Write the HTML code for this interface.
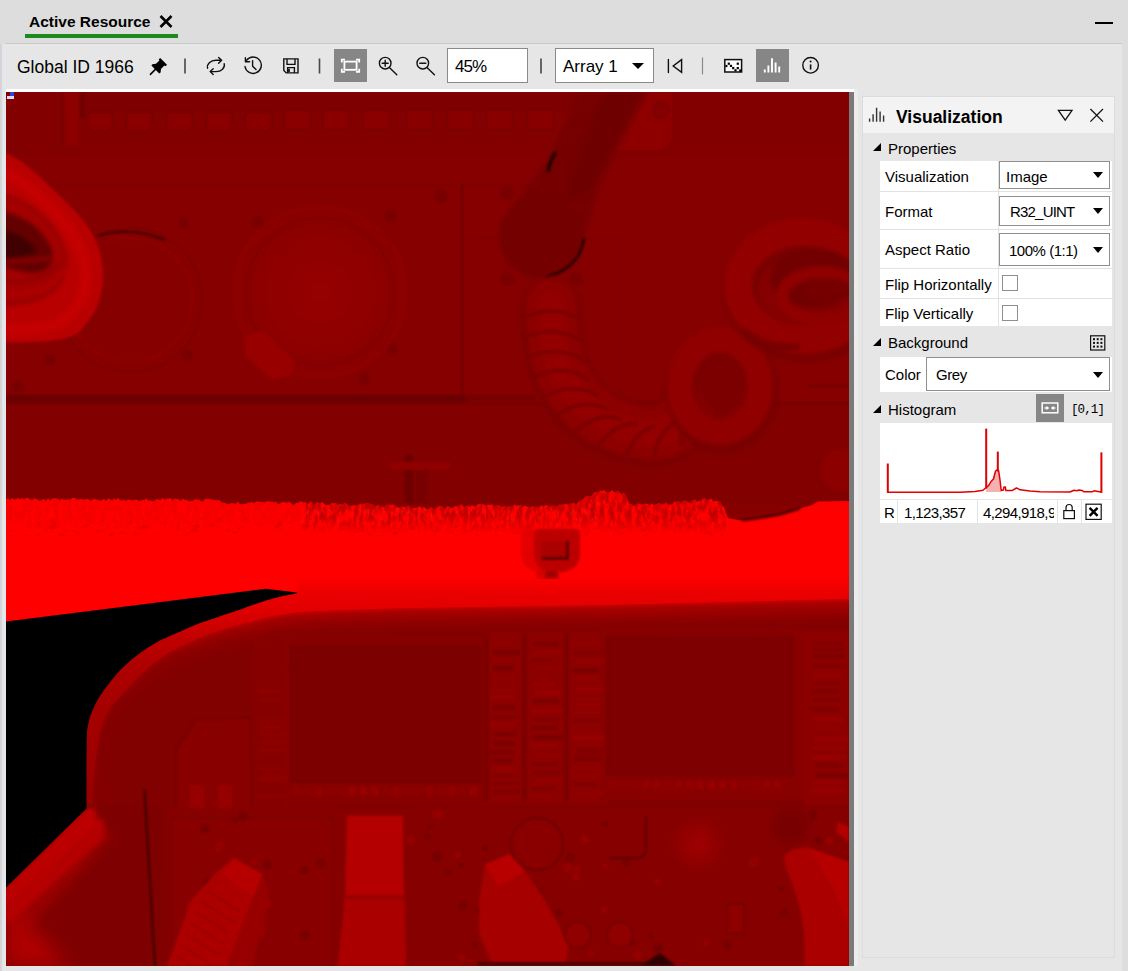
<!DOCTYPE html>
<html lang="en">
<head>
<meta charset="utf-8">
<title>Active Resource</title>
<style>
*{box-sizing:border-box;margin:0;padding:0}
html,body{width:1128px;height:971px;overflow:hidden;background:#dddddd;font-family:"Liberation Sans",sans-serif;color:#000}
.abs{position:absolute}
#tabstrip{left:0;top:0;width:1128px;height:43px;background:#dddddd}
#tabtitle{left:29px;top:12px;font-weight:bold;font-size:15.5px;line-height:20px;white-space:nowrap}
#tabline{left:25px;top:34px;width:153px;height:4px;background:#1e8a1e}
#mindash{left:1095px;top:22px;width:18px;height:2px;background:#000}
#main{left:6px;top:43px;width:1116px;height:928px;background:#e6e6e6;border-top:1px solid #c9c9c9}
#tb-title{left:17px;top:56px;font-size:17.5px;line-height:22px;white-space:nowrap}
.sep{width:1px;height:15px;background:#555;top:59px}
.btn-on{background:#868686;width:33px;height:33px;top:49px}
.inp{background:#fff;border:1px solid #8a8a8a;top:48px;height:35px;font-size:17px;line-height:35px;white-space:nowrap}
#whiteline{left:6px;top:89px;width:848px;height:3px;background:#fff}
#imgwrap{left:6px;top:92px;width:843px;height:874px;background:#8a0000;overflow:hidden}
#vstrip{left:849px;top:92px;width:5px;height:874px;background:#7a7a7a}
#panel{left:862px;top:96px;width:253px;height:862px;border:1px solid #dcdcdc}
#phead{left:863px;top:97px;width:251px;height:36px;background:#f3f3f3}
#ptitle{left:896px;top:106px;font-weight:bold;font-size:17.5px;line-height:22px;white-space:nowrap}
.sect{font-size:15px;line-height:18px;white-space:nowrap;left:888px}
.tri{width:0;height:0;border-left:8px solid transparent;border-bottom:8px solid #000;left:872.5px;margin-top:-1px}
.row{left:880px;width:232px;background:#fff;border-bottom:1px solid #e2e2e2}
.lbl{font-size:15px;line-height:18px;white-space:nowrap;left:885px}
.dd{background:#fff;border:1px solid #8f8f8f;font-size:15px;white-space:nowrap}
.dd span{position:absolute;left:9px;top:1px}
.caret{position:absolute;right:6px;width:0;height:0;border-left:5px solid transparent;border-right:5px solid transparent;border-top:6px solid #000}
.cb{width:16px;height:16px;background:#fff;border:1px solid #8f8f8f;left:1002px}
.vdiv{width:1px;background:#e2e2e2}
</style>
</head>
<body>
<div id="tabstrip" class="abs"></div>
<div id="tabtitle" class="abs">Active Resource</div>
<div id="tabline" class="abs"></div>
<div id="mindash" class="abs"></div>
<div class="abs" style="left:0;top:44px;width:6px;height:927px;background:linear-gradient(90deg,#d2d2d2 0,#d6d6d6 1.5px,#e3e5e9 2.5px,#e6e8ec 6px)"></div>
<div id="main" class="abs"></div>
<div id="tb-title" class="abs">Global ID 1966</div>
<div class="abs btn-on" style="left:334px"></div>
<div class="abs btn-on" style="left:756px"></div>
<div class="abs inp" style="left:447px;width:81px;padding-left:7px;letter-spacing:-0.9px">45%</div>
<div class="abs inp" style="left:555px;width:99px;padding-left:7px">Array 1<i class="caret" style="top:14px;right:9px;border-left-width:6px;border-right-width:6px;border-top-width:6px"></i></div>
<svg class="abs" style="left:0;top:0" width="1128" height="92" viewBox="0 0 1128 92" fill="none" stroke="#111" stroke-width="1.4" stroke-linecap="round" stroke-linejoin="round">
<!-- tab close X -->
<path d="M160.5 16 L171.5 27 M171.5 16 L160.5 27" stroke="#000" stroke-width="2.6" stroke-linecap="butt"/>
<!-- pin -->
<g stroke="none" fill="#000"><path d="M160.2 58 L167 64.8 L165.6 66.2 L164.4 65.6 L161 69 L160.6 72.6 L159.2 73.4 L151.4 65.6 L152.4 64.2 L156 63.8 L159.4 60.4 L158.8 59.2 Z"/></g>
<path d="M155.4 69.4 L150.4 74.4" stroke="#000" stroke-width="1.5"/>
<!-- separators -->
<g stroke="#484848" stroke-width="1.6" stroke-linecap="butt"><path d="M185 58.5V73.5M319.5 58.5V73.5M541 58.5V73.5"/><path d="M702.5 57.5V74.5" stroke="#8a8a8a" stroke-width="1.2"/></g>
<!-- refresh -->
<path d="M207.6 68.2 A8.4 6.6 0 0 1 215.8 60.3 H221.4 M218.6 57.5 L221.6 60.3 L218.6 63.2"/>
<path d="M224.2 63.6 A8.4 6.6 0 0 1 216 71.6 H210.4 M213.2 68.7 L210.2 71.6 L213.2 74.4"/>
<!-- history -->
<path d="M246.6 60.2 A8.2 8.2 0 1 1 245 66.5"/>
<path d="M245.4 57.6 V61.8 H249.6"/>
<path d="M252.6 60.6 V66.2 L256 69.6"/>
<!-- save -->
<path d="M283.8 58.9 H298 V72.9 H286.2 L283.8 70.5 Z M287 58.9 V64.4 H295 V58.9 M287.6 72.9 V67.6 H294.4 V72.9" stroke-linejoin="miter"/>
<path d="M289 68.8 V72" stroke-width="1.8" stroke-linecap="butt"/>
<!-- fit icon -->
<g stroke="#fff" stroke-width="1.8" stroke-linecap="butt" stroke-linejoin="miter"><rect x="344.4" y="61.6" width="12.2" height="8.2"/><path d="M341.8 62.6 V59.6 H345 M356 59.6 H359.2 V62.6 M359.2 68.8 V71.8 H356 M345 71.8 H341.8 V68.8"/></g>
<!-- zoom in -->
<circle cx="385.2" cy="63.2" r="5.8"/><path d="M389.4 67.6 L396.8 74.8 M382.2 63.2 H388.2 M385.2 60.2 V66.2"/>
<!-- zoom out -->
<circle cx="422.8" cy="63.2" r="5.8"/><path d="M427 67.6 L434.4 74.8 M419.8 63.2 H425.8"/>
<!-- first -->
<path d="M668.4 59.4 V72.6 M681.6 59.6 L673.2 66 L681.6 72.4 Z" stroke-linejoin="miter"/>
<!-- image icon -->
<rect x="724.8" y="59.6" width="16.8" height="12.4" fill="#fbfbfb" stroke-width="1.5" stroke-linejoin="miter"/>
<g stroke="none" fill="#000"><rect x="727.7" y="62.6" width="2.2" height="2.2"/><rect x="725.4" y="64.9" width="2" height="2.2"/><rect x="729.9" y="64.8" width="2.2" height="2.2"/><rect x="732.1" y="67" width="2.2" height="2.2"/><rect x="734.4" y="69.2" width="2.2" height="2.2"/><rect x="736.7" y="62.6" width="2.2" height="2.2"/><rect x="736.7" y="67" width="2.2" height="2.2"/><rect x="739.2" y="69.4" width="2.4" height="2.4"/></g>
<!-- hist icon white -->
<g stroke="#fff" stroke-width="1.9" stroke-linecap="butt"><path d="M764.8 72.6V69.4M768.4 72.6V65.4M772 72.6V58.2M775.6 72.6V62.4M779.2 72.6V66.6"/></g>
<!-- info -->
<circle cx="810.6" cy="65.3" r="7.8"/><path d="M810.6 64.4 V69.6" stroke-width="1.6" stroke-linecap="butt"/><circle cx="810.6" cy="61.6" r="1" fill="#111" stroke="none"/>
<!-- minimise handled by div -->
</svg>

<div id="whiteline" class="abs"></div>
<div id="vstrip" class="abs"></div>
<div class="abs" style="left:854px;top:89px;width:4px;height:877px;background:#ececec"></div>
<div id="imgwrap" class="abs">
<svg width="843" height="874" viewBox="6 92 843 874" style="display:block">
<defs>
<filter id="b1" color-interpolation-filters="sRGB" filterUnits="userSpaceOnUse" x="-10" y="80" width="880" height="900"><feGaussianBlur stdDeviation="1"/></filter>
<filter id="b2" color-interpolation-filters="sRGB" filterUnits="userSpaceOnUse" x="-10" y="80" width="880" height="900"><feGaussianBlur stdDeviation="2.2"/></filter>
<filter id="b4" color-interpolation-filters="sRGB" filterUnits="userSpaceOnUse" x="-10" y="80" width="880" height="900"><feGaussianBlur stdDeviation="4.5"/></filter>
<filter id="b8" color-interpolation-filters="sRGB" filterUnits="userSpaceOnUse" x="-10" y="80" width="880" height="900"><feGaussianBlur stdDeviation="9"/></filter>
<linearGradient id="gband" gradientUnits="userSpaceOnUse" x1="0" y1="490" x2="0" y2="600"><stop offset="0" stop-color="#fb0000"/><stop offset=".35" stop-color="#ff0000"/><stop offset="1" stop-color="#fe0000"/></linearGradient>
<linearGradient id="gcoil" x1="0" y1="0" x2="1" y2="0">
<stop offset="0" stop-color="#b60000"/><stop offset=".6" stop-color="#c60000"/><stop offset="1" stop-color="#a80000"/>
</linearGradient>
<linearGradient id="gpillar" x1="0" y1="0" x2="1" y2="0">
<stop offset="0" stop-color="#c40000"/><stop offset=".5" stop-color="#b40000"/><stop offset="1" stop-color="#980000"/>
</linearGradient>
<filter id="noise" color-interpolation-filters="sRGB" x="0" y="0" width="100%" height="100%"><feTurbulence type="fractalNoise" baseFrequency="0.22 0.09" numOctaves="3" seed="4" result="n"/><feColorMatrix in="n" type="matrix" values="0 0 0 0 0.66  0 0 0 0 0  0 0 0 0 0  4 0 0 0 -1.5" result="m"/><feComposite in="m" in2="SourceGraphic" operator="in"/></filter>
<filter id="noise2" color-interpolation-filters="sRGB" x="0" y="0" width="100%" height="100%"><feTurbulence type="fractalNoise" baseFrequency="0.3 0.12" numOctaves="2" seed="9" result="n"/><feColorMatrix in="n" type="matrix" values="0 0 0 0 1  0 0 0 0 0.2  0 0 0 0 0.2  0 3.4 0 0 -1.75" result="m"/><feComposite in="m" in2="SourceGraphic" operator="in"/></filter>
<filter id="noise3" color-interpolation-filters="sRGB" x="0" y="0" width="100%" height="100%"><feTurbulence type="fractalNoise" baseFrequency="0.12 0.2" numOctaves="2" seed="21" result="n"/><feColorMatrix in="n" type="matrix" values="0 0 0 0 0.78  0 0 0 0 0  0 0 0 0 0  0 0 4 0 -2.35" result="m"/><feComposite in="m" in2="SourceGraphic" operator="in"/></filter>
<radialGradient id="ggauge"><stop offset="0" stop-color="#960000"/><stop offset=".8" stop-color="#8e0000"/><stop offset="1" stop-color="#880000"/></radialGradient>
<radialGradient id="gknob"><stop offset="0" stop-color="#a00000"/><stop offset="1" stop-color="#860000"/></radialGradient>
</defs>
<!-- base -->
<rect x="6" y="92" width="843" height="874" fill="#860000"/>
<!-- upper wall details -->
<g filter="url(#b1)">
<rect x="6" y="92" width="843" height="66" fill="#830000"/><rect x="80" y="92" width="500" height="20" fill="#7e0000"/>
<rect x="22" y="159.5" width="560" height="2.5" fill="#760000"/>
<rect x="30" y="184" width="540" height="2" fill="#7e0000"/>
<rect x="6" y="158" width="560" height="26" fill="#860000"/>
<!-- top button row -->
<g fill="#8a0000" stroke="#760000" stroke-width="1.8">
<rect x="87" y="112" width="26" height="20" rx="5"/><rect x="126" y="112" width="27" height="20" rx="5"/><rect x="166" y="112" width="27" height="20" rx="5"/><rect x="206" y="112" width="27" height="20" rx="5"/><rect x="245" y="112" width="27" height="20" rx="5"/><rect x="284" y="110" width="27" height="20" rx="5"/><rect x="323" y="110" width="27" height="20" rx="5"/><rect x="363" y="110" width="27" height="20" rx="5"/><rect x="406" y="110" width="27" height="20" rx="5"/><rect x="447" y="110" width="27" height="20" rx="5"/><rect x="486" y="110" width="27" height="20" rx="5"/><rect x="527" y="110" width="27" height="20" rx="5"/>
</g>
<rect x="63" y="92" width="16" height="53" fill="#8c0000"/><rect x="61" y="92" width="2.5" height="54" fill="#740000"/><rect x="80" y="92" width="5" height="26" fill="#700000"/>
<!-- gauges -->
<circle cx="130" cy="300" r="72" fill="#870000" stroke="#7c0000" stroke-width="2"/>
<circle cx="130" cy="300" r="62" fill="none" stroke="#8f0000" stroke-width="2"/>
<path d="M98 236 Q130 226 165 240" stroke="#3c0000" stroke-width="2" fill="none"/>
<circle cx="320" cy="292" r="86" fill="#8a0000" stroke="#900000" stroke-width="2.5"/>
<circle cx="320" cy="292" r="74" fill="url(#ggauge)" stroke="#800000" stroke-width="2"/>
<path d="M243 338 L262 330 L296 362 L290 376 L272 380 L246 356 Z" fill="#980000"/>
<!-- screws -->
<g fill="#7a0000"><circle cx="183" cy="223" r="6"/><circle cx="258" cy="222" r="6"/><circle cx="391" cy="216" r="6"/><circle cx="187" cy="355" r="6"/><circle cx="393" cy="349" r="6"/><circle cx="50" cy="360" r="6"/><circle cx="364" cy="379" r="6"/><circle cx="358" cy="451" r="5"/><circle cx="18" cy="387" r="7"/><circle cx="441" cy="196" r="7"/><circle cx="507" cy="193" r="7"/><circle cx="507" cy="279" r="7"/><circle cx="576" cy="279" r="7"/><circle cx="660" cy="110" r="7"/><circle cx="594" cy="462" r="5"/></g>
<!-- lower wall panel -->
<rect x="6" y="404" width="843" height="100" fill="#820000"/>
<rect x="6" y="395" width="460" height="7" fill="#6a0000"/><rect x="466" y="395" width="70" height="6" fill="#760000"/><rect x="6" y="402" width="843" height="3" fill="#780000"/>
<rect x="461" y="184" width="2" height="216" fill="#6a0000"/>
<rect x="463" y="238" width="160" height="1.5" fill="#7e0000"/>
<rect x="620" y="238" width="1.5" height="160" fill="#800000"/>
<path d="M100 500 Q126 484 152 500 Z" fill="#800000"/>
<rect x="405" y="455" width="8" height="48" fill="#6c0000"/>
<rect x="416" y="465" width="12" height="38" fill="#780000"/>
<rect x="390" y="462" width="60" height="8" fill="#900000"/>
</g>
<!-- dark arm -->
<path d="M640 92 L672 92 L672 140 L660 150 L612 150 Z" fill="#8e0000" filter="url(#b1)"/>
<circle cx="661" cy="110" r="7.5" fill="#860000" stroke="#780000" stroke-width="2" filter="url(#b1)"/>
<g filter="url(#b2)">
<path d="M580 92 L648 92 L616 152 L599 188 L586 232 L560 262 L505 250 L501 220 L522 194 L550 156 Z" fill="#760000"/>
<circle cx="541.7" cy="236.7" r="42.5" fill="#740000"/>
<path d="M606 92 L640 92 L608 152 L590 190 L566 200 L580 150 Z" fill="#6e0000"/>
</g>
<path d="M584 238 Q580 268 546 277" stroke="#2a0000" stroke-width="2.5" fill="none" filter="url(#b1)"/>
<path d="M556 152 Q550 160 548 172" stroke="#200000" stroke-width="3.5" fill="none" filter="url(#b1)"/>
<!-- corrugated hose -->
<g filter="url(#b2)" fill="none" stroke-linecap="round">
<path d="M551 308 C552 340 556 370 573 394 S610 430 644 435 S690 412 702 380" stroke="#7a0000" stroke-width="62"/>
<path d="M551 305 C552 340 556 370 573 392 S610 428 644 433 S690 410 700 378" stroke="#8c0000" stroke-width="52"/>
<path d="M551 305 C552 340 556 370 573 392 S610 428 644 433 S690 410 700 378" stroke="#940000" stroke-width="26"/>
</g>
<g filter="url(#b1)" stroke="#7a0000" stroke-width="3.5" fill="none">
<path d="M524 318 Q550 304 578 318"/><path d="M524 338 Q552 324 580 340"/><path d="M527 358 Q556 344 584 360"/><path d="M533 378 Q562 362 590 380"/><path d="M542 398 Q572 380 598 396"/><path d="M556 416 Q584 396 608 410"/><path d="M574 432 Q600 410 622 420"/><path d="M598 446 Q616 422 638 424"/><path d="M626 456 Q636 430 656 426"/><path d="M654 456 Q658 432 678 420"/><path d="M682 446 Q678 424 694 408"/>
</g>
<!-- right coil -->
<g filter="url(#b2)" fill="none">
<ellipse cx="722" cy="390" rx="40" ry="46" stroke="#780000" stroke-width="34"/>
<ellipse cx="720" cy="386" rx="40" ry="46" stroke="#900000" stroke-width="26"/>
<ellipse cx="722" cy="386" rx="22" ry="28" fill="#7c0000"/>
<ellipse cx="806" cy="290" rx="66" ry="54" stroke="#780000" stroke-width="36"/>
<ellipse cx="804" cy="286" rx="66" ry="54" stroke="#930000" stroke-width="28"/>
<ellipse cx="814" cy="278" rx="44" ry="30" fill="#720000"/>
<ellipse cx="822" cy="296" rx="40" ry="24" stroke="#900000" stroke-width="12"/>
<ellipse cx="828" cy="290" rx="24" ry="12" fill="#760000"/>
<path d="M742 330 Q770 352 800 346" stroke="#760000" stroke-width="7"/>
</g>
<circle cx="842" cy="470" r="24" fill="#8c0000" stroke="#7c0000" stroke-width="3" filter="url(#b2)"/>
<rect x="808" y="384" width="41" height="3" fill="#760000" filter="url(#b1)"/>
<!-- left coil -->
<g filter="url(#b1)"><path d="M0.0 150.0 C1.0 150.5 1.7 150.6 6.0 153.0 C10.3 155.4 18.2 158.9 25.8 164.7 C33.4 170.5 42.9 179.8 51.5 188.0 C60.1 196.2 70.0 205.0 77.3 213.6 C84.6 222.2 91.0 229.9 95.3 239.4 C99.6 248.9 102.3 260.0 103.0 270.3 C103.7 280.6 101.8 292.6 99.2 301.2 C96.6 309.8 91.7 316.2 87.6 321.8 C83.5 327.4 81.0 331.8 74.7 335.0 C68.4 338.2 59.1 339.8 50.0 341.0 C40.9 342.2 28.3 342.3 20.0 342.5 C11.7 342.7 3.3 342.1 0.0 342.0 Z" fill="#b80000"/></g>
<g filter="url(#b2)" fill="none">
<path d="M0.0 172.0 C3.3 173.5 12.5 176.0 20.0 181.0 C27.5 186.0 37.0 194.2 45.0 202.0 C53.0 209.8 61.8 219.3 68.0 228.0 C74.2 236.7 79.0 245.7 82.0 254.0 C85.0 262.3 86.3 270.0 86.0 278.0 C85.7 286.0 83.7 295.0 80.0 302.0 C76.3 309.0 70.7 315.7 64.0 320.0 C57.3 324.3 50.7 326.3 40.0 328.0 C29.3 329.7 6.7 329.7 0.0 330.0" stroke="#c40000" stroke-width="12"/>
<path d="M0.0 194.0 C3.3 195.2 13.0 197.3 20.0 201.0 C27.0 204.7 35.3 209.5 42.0 216.0 C48.7 222.5 56.0 231.7 60.0 240.0 C64.0 248.3 66.7 258.0 66.0 266.0 C65.3 274.0 61.3 282.3 56.0 288.0 C50.7 293.7 43.3 297.2 34.0 300.0 C24.7 302.8 5.7 304.2 0.0 305.0 Z" fill="#a40000" stroke="#8a0000" stroke-width="2.5"/>
<path d="M0.0 210.0 C3.3 211.2 13.7 213.8 20.0 217.0 C26.3 220.2 32.7 223.5 38.0 229.0 C43.3 234.5 50.0 243.8 52.0 250.0 C54.0 256.2 53.3 262.2 50.0 266.0 C46.7 269.8 40.3 273.0 32.0 273.0 C23.7 273.0 5.3 267.2 0.0 266.0 Z" fill="#640000"/>
<path d="M0.0 230.0 C3.0 230.8 12.7 232.5 18.0 235.0 C23.3 237.5 29.3 241.8 32.0 245.0 C34.7 248.2 39.3 251.8 34.0 254.0 C28.7 256.2 5.7 257.3 0.0 258.0 Z" fill="#400000"/>
<path d="M0 281 C24 284 50 280 60 262" stroke="#860000" stroke-width="2.5"/>
<path d="M0 293 C30 296 56 290 66 268" stroke="#b00000" stroke-width="4"/>
<path d="M4 262 L52 258" stroke="#8c0000" stroke-width="4"/>
</g>

<!-- bright band -->
<clipPath id="clband"><polygon points="6.0,498.9 8.0,498.3 10.0,500.0 12.0,498.0 14.0,499.6 16.0,499.0 18.0,498.0 20.0,499.5 22.0,497.9 24.0,499.3 26.0,498.0 28.0,498.1 30.0,499.2 32.0,500.6 34.0,498.2 36.0,498.6 38.0,499.9 40.0,501.0 42.0,499.8 44.0,499.1 46.0,501.1 48.0,498.0 50.0,500.7 52.0,498.8 54.0,498.3 56.0,498.2 58.0,498.8 60.0,500.6 62.0,498.4 64.0,499.8 66.0,500.0 68.0,499.1 70.0,499.7 72.0,498.0 74.0,498.0 76.0,498.5 78.0,500.1 80.0,499.3 82.0,498.9 84.0,499.8 86.0,499.3 88.0,498.8 90.0,500.5 92.0,500.2 94.0,498.6 96.0,499.8 98.0,499.6 100.0,500.8 102.0,500.3 104.0,498.8 106.1,501.2 108.1,498.2 110.1,499.3 112.1,500.4 114.1,498.4 116.1,499.5 118.2,498.0 120.2,500.2 122.2,500.5 124.2,499.9 126.2,500.9 128.2,499.0 130.3,500.3 132.3,500.0 134.3,499.9 136.3,499.5 138.3,500.8 140.4,501.2 142.4,499.6 144.4,500.3 146.4,498.2 148.4,500.4 150.4,500.2 152.5,501.4 154.5,500.8 156.5,499.0 158.5,499.4 160.5,500.3 162.5,498.1 164.6,499.7 166.6,498.7 168.6,498.5 170.6,498.3 172.6,500.7 174.6,498.6 176.7,499.0 178.7,499.5 180.7,501.1 182.7,498.4 184.7,499.7 186.8,500.0 188.8,501.2 190.8,501.0 192.8,501.1 194.8,499.2 196.8,499.6 198.9,499.4 200.9,501.2 202.9,501.5 204.9,498.8 206.9,498.9 208.9,499.1 211.0,499.1 213.0,499.9 215.0,500.3 217.3,500.2 219.7,500.3 222.0,502.7 224.0,502.6 226.0,503.2 228.0,504.5 230.0,503.6 232.0,503.1 234.0,503.4 236.0,503.6 238.0,501.5 240.0,504.4 242.0,504.0 244.0,504.3 246.0,504.0 248.0,502.6 250.0,502.7 252.0,501.7 254.0,503.5 256.0,501.5 258.0,501.5 260.0,502.0 262.0,501.9 264.0,502.5 266.0,501.5 268.0,501.3 270.0,501.8 272.0,501.6 274.0,502.5 276.0,501.4 278.0,504.3 280.0,503.4 282.0,501.8 284.0,502.2 286.0,502.5 288.0,502.5 290.0,501.7 292.0,504.2 294.0,504.7 296.0,502.9 298.0,502.9 300.0,501.6 302.0,501.7 304.0,502.6 306.0,502.4 308.0,504.3 310.0,502.1 312.0,501.7 314.0,504.9 316.0,503.5 318.0,502.2 320.0,503.6 322.0,501.9 324.0,503.7 326.0,505.3 328.0,504.9 330.0,504.4 332.0,503.0 334.0,503.4 336.0,502.8 338.0,504.9 340.0,504.1 342.0,505.0 344.0,503.5 346.0,503.2 348.0,505.3 350.0,505.9 352.0,505.5 354.0,505.4 356.0,505.5 358.0,505.3 360.0,503.6 362.0,504.6 364.0,504.1 366.0,503.0 368.0,503.1 370.0,504.0 372.0,504.0 374.0,505.5 376.0,506.5 378.0,504.8 380.0,506.5 382.0,506.8 384.0,506.8 386.0,504.9 388.0,504.5 390.0,504.7 392.0,504.7 394.0,504.8 396.0,506.4 398.0,507.4 400.0,507.4 402.0,506.3 404.0,507.0 406.0,507.6 408.0,505.3 410.0,507.3 412.0,508.3 414.0,508.0 416.0,508.0 418.0,507.2 420.0,506.3 422.0,508.5 424.0,507.1 426.0,508.8 428.0,509.5 430.0,507.6 432.0,507.5 434.0,509.3 436.0,508.4 438.0,506.4 440.0,506.1 442.0,506.1 444.0,508.5 446.0,508.0 448.0,505.7 450.0,507.9 452.0,508.3 454.0,507.0 456.0,505.9 458.0,506.4 460.0,504.9 462.0,504.3 464.0,507.5 466.0,506.3 468.0,505.7 470.0,507.0 472.0,505.1 474.0,506.5 476.0,506.2 478.0,504.0 480.0,504.2 482.1,504.4 484.1,504.3 486.1,505.6 488.2,504.5 490.2,505.1 492.2,504.2 494.3,506.9 496.3,505.1 498.3,505.5 500.4,506.0 502.4,507.2 504.4,505.6 506.5,507.4 508.5,506.0 510.6,506.2 512.6,506.3 514.6,504.6 516.7,506.1 518.7,505.3 520.7,504.8 522.8,507.5 524.8,505.5 526.8,506.6 528.9,507.5 530.9,507.0 532.9,506.3 535.0,507.0 537.0,507.2 539.1,507.8 541.1,505.2 543.2,506.6 545.2,505.3 547.3,505.2 549.3,506.7 551.4,505.6 553.4,505.5 555.5,506.0 557.5,506.3 559.6,504.5 561.6,504.9 563.7,504.3 565.7,504.1 567.8,504.5 569.8,503.5 571.9,503.5 573.9,503.1 576.0,504.5 578.3,502.0 580.7,500.9 583.0,499.5 585.3,496.2 587.7,496.2 590.0,496.5 592.0,495.6 594.0,492.6 596.0,491.9 598.0,492.4 600.0,490.5 602.0,490.9 604.0,490.1 606.0,492.0 608.0,492.2 610.0,492.3 612.0,490.0 614.0,492.1 616.0,492.1 618.0,490.6 620.0,493.3 622.0,494.3 624.0,492.4 626.0,495.5 629.0,503.7 631.1,504.0 633.2,505.8 635.2,505.4 637.3,503.2 639.4,504.2 641.5,504.6 643.6,504.0 645.7,503.6 647.8,504.1 649.8,505.6 651.9,503.3 654.0,505.2 656.1,504.6 658.1,502.9 660.2,503.8 662.2,504.6 664.3,504.0 666.3,502.3 668.4,505.2 670.4,504.3 672.5,504.7 674.5,501.6 676.6,501.9 678.6,500.9 680.7,503.2 682.7,501.3 684.8,500.6 686.8,501.4 688.9,502.8 690.9,502.3 693.0,500.2 695.0,499.6 697.0,501.9 699.0,500.5 701.0,500.7 703.0,498.4 705.0,498.0 707.2,500.3 709.3,499.6 711.5,498.5 713.7,501.7 715.8,500.8 718.0,501.5 720.0,501.3 722.0,506.0 724.0,507.0 728.0,518.0 740.0,520.5 760.0,518.0 780.0,514.5 800.0,508.5 812.0,505.0 818.0,501.5 849.0,501.0 849,660 6,660"/></clipPath>
<rect x="6" y="485" width="843" height="180" fill="url(#gband)" clip-path="url(#clband)"/>
<linearGradient id="gfn" gradientUnits="userSpaceOnUse" x1="0" y1="488" x2="0" y2="534"><stop offset="0" stop-color="#000"/><stop offset=".6" stop-color="#000"/><stop offset="1" stop-color="#000" stop-opacity="0"/></linearGradient>
<g clip-path="url(#clband)"><rect x="6" y="488" width="300" height="46" fill="url(#gfn)" filter="url(#noise)" opacity=".12"/><rect x="306" y="488" width="420" height="46" fill="url(#gfn)" filter="url(#noise)" opacity=".7"/><rect x="300" y="488" width="300" height="40" fill="url(#gfn)" filter="url(#noise2)" opacity=".22"/><rect x="596" y="496" width="134" height="32" fill="url(#gfn)" filter="url(#noise3)" opacity=".75"/><rect x="6" y="518" width="720" height="18" fill="#c80000" filter="url(#noise3)" opacity=".6"/></g>
<path d="M742 520.5 L760 518 L780 514.5 L800 508.5" stroke="#3a0000" stroke-width="2.2" fill="none" filter="url(#b1)"/>
<g filter="url(#b1)"><path d="M527 529 H574 Q580 529 580 536 V556 Q578 570 562 572 H538 Q524 570 521 556 V536 Q521 529 527 529 Z" fill="#e40000"/><path d="M540 529 H574 Q580 529 580 536 V556 Q578 570 562 572 H546 Q536 568 534 556 V536 Q534 529 540 529 Z" fill="#bc0000"/><rect x="541" y="541" width="27" height="18" fill="#aa0000"/><path d="M567.5 541 V558.5 H542" stroke="#3a0000" stroke-width="2" fill="none"/><rect x="536" y="571" width="23" height="12" fill="#d60000"/><rect x="545" y="571" width="13" height="11" rx="4" fill="#a00000"/></g>
<linearGradient id="gtop" gradientUnits="userSpaceOnUse" x1="0" y1="578" x2="0" y2="806"><stop offset="0.000" stop-color="#fe0000"/><stop offset="0.031" stop-color="#f40000"/><stop offset="0.066" stop-color="#eb0000"/><stop offset="0.123" stop-color="#e40000"/><stop offset="0.184" stop-color="#d40000"/><stop offset="0.272" stop-color="#c00000"/><stop offset="0.382" stop-color="#ae0000"/><stop offset="0.535" stop-color="#a60000"/><stop offset="0.711" stop-color="#a20000"/><stop offset="1.000" stop-color="#960000"/></linearGradient>
<path d="M860.0 598.5 C833.3 599.2 743.3 601.4 700.0 602.5 C656.7 603.6 633.3 604.3 600.0 605.0 C566.7 605.7 533.3 606.0 500.0 606.5 C466.7 607.0 426.7 607.4 400.0 608.0 C373.3 608.6 356.7 609.3 340.0 610.0 C323.3 610.7 308.8 611.4 299.8 612.1 C290.8 612.7 290.8 613.0 286.0 613.7 C281.1 614.4 276.0 615.3 270.8 616.4 C265.6 617.5 260.2 618.9 254.8 620.3 C249.4 621.6 243.7 623.0 238.2 624.5 C232.8 626.0 228.2 627.2 222.2 629.2 C216.2 631.2 208.2 633.8 202.3 636.2 C196.5 638.6 192.2 641.0 187.0 643.5 C181.8 645.9 174.5 649.2 171.2 650.8 C167.9 652.4 169.8 651.2 167.1 653.1 C164.4 655.1 158.8 659.2 154.9 662.3 C150.9 665.4 146.6 669.1 143.5 671.8 C140.5 674.6 138.6 676.6 136.5 678.8 C134.3 680.9 132.5 682.6 130.5 684.7 C128.5 686.8 126.5 689.2 124.3 691.6 C122.1 693.9 119.4 696.6 117.3 698.9 C115.3 701.2 113.5 703.0 111.9 705.2 C110.2 707.4 109.0 709.8 107.6 712.2 C106.2 714.7 104.8 717.3 103.7 720.0 C102.5 722.7 101.5 725.6 100.7 728.2 C99.9 730.8 99.8 730.2 98.9 735.5 C98.0 740.8 96.4 752.7 95.5 760.1 C94.6 767.5 94.2 771.9 93.5 780.0 C92.8 788.1 91.8 803.8 91.5 808.5 L91.5 980 L870 980 Z" fill="#810000"/>
<clipPath id="cl-lip"><path d="M860.0 598.5 C833.3 599.2 743.3 601.4 700.0 602.5 C656.7 603.6 633.3 604.3 600.0 605.0 C566.7 605.7 533.3 606.0 500.0 606.5 C466.7 607.0 426.7 607.4 400.0 608.0 C373.3 608.6 356.7 609.3 340.0 610.0 C323.3 610.7 308.8 611.4 299.8 612.1 C290.8 612.7 290.8 613.0 286.0 613.7 C281.1 614.4 276.0 615.3 270.8 616.4 C265.6 617.5 260.2 618.9 254.8 620.3 C249.4 621.6 243.7 623.0 238.2 624.5 C232.8 626.0 228.2 627.2 222.2 629.2 C216.2 631.2 208.2 633.8 202.3 636.2 C196.5 638.6 192.2 641.0 187.0 643.5 C181.8 645.9 174.5 649.2 171.2 650.8 C167.9 652.4 169.8 651.2 167.1 653.1 C164.4 655.1 158.8 659.2 154.9 662.3 C150.9 665.4 146.6 669.1 143.5 671.8 C140.5 674.6 138.6 676.6 136.5 678.8 C134.3 680.9 132.5 682.6 130.5 684.7 C128.5 686.8 126.5 689.2 124.3 691.6 C122.1 693.9 119.4 696.6 117.3 698.9 C115.3 701.2 113.5 703.0 111.9 705.2 C110.2 707.4 109.0 709.8 107.6 712.2 C106.2 714.7 104.8 717.3 103.7 720.0 C102.5 722.7 101.5 725.6 100.7 728.2 C99.9 730.8 99.8 730.2 98.9 735.5 C98.0 740.8 96.4 752.7 95.5 760.1 C94.6 767.5 94.2 771.9 93.5 780.0 C92.8 788.1 91.8 803.8 91.5 808.5 L91.5 980 L870 980 Z"/></clipPath>
<linearGradient id="gfade" gradientUnits="userSpaceOnUse" x1="0" y1="612" x2="0" y2="712"><stop offset="0" stop-color="#fff"/><stop offset=".28" stop-color="#fff" stop-opacity=".6"/><stop offset=".53" stop-color="#fff" stop-opacity=".25"/><stop offset="1" stop-color="#fff" stop-opacity=".1"/></linearGradient>
<mask id="mfade" maskUnits="userSpaceOnUse" x="0" y="500" width="900" height="500"><rect x="0" y="500" width="900" height="500" fill="url(#gfade)"/></mask>
<path id="lipc" d="M860.0 598.5 C833.3 599.2 743.3 601.4 700.0 602.5 C656.7 603.6 633.3 604.3 600.0 605.0 C566.7 605.7 533.3 606.0 500.0 606.5 C466.7 607.0 426.7 607.4 400.0 608.0 C373.3 608.6 356.7 609.3 340.0 610.0 C323.3 610.7 308.8 611.4 299.8 612.1 C290.8 612.7 290.8 613.0 286.0 613.7 C281.1 614.4 276.0 615.3 270.8 616.4 C265.6 617.5 260.2 618.9 254.8 620.3 C249.4 621.6 243.7 623.0 238.2 624.5 C232.8 626.0 228.2 627.2 222.2 629.2 C216.2 631.2 208.2 633.8 202.3 636.2 C196.5 638.6 192.2 641.0 187.0 643.5 C181.8 645.9 174.5 649.2 171.2 650.8 C167.9 652.4 169.8 651.2 167.1 653.1 C164.4 655.1 158.8 659.2 154.9 662.3 C150.9 665.4 146.6 669.1 143.5 671.8 C140.5 674.6 138.6 676.6 136.5 678.8 C134.3 680.9 132.5 682.6 130.5 684.7 C128.5 686.8 126.5 689.2 124.3 691.6 C122.1 693.9 119.4 696.6 117.3 698.9 C115.3 701.2 113.5 703.0 111.9 705.2 C110.2 707.4 109.0 709.8 107.6 712.2 C106.2 714.7 104.8 717.3 103.7 720.0 C102.5 722.7 101.5 725.6 100.7 728.2 C99.9 730.8 99.8 730.2 98.9 735.5 C98.0 740.8 96.4 752.7 95.5 760.1 C94.6 767.5 94.2 771.9 93.5 780.0 C92.8 788.1 91.8 803.8 91.5 808.5" fill="none"/>
<g clip-path="url(#cl-lip)"><g mask="url(#mfade)"><g filter="url(#b2)" fill="none" stroke-linejoin="round">
<use href="#lipc" stroke="#840000" stroke-width="60"/>
<use href="#lipc" stroke="#8a0000" stroke-width="46"/>
<use href="#lipc" stroke="#920000" stroke-width="34"/>
<use href="#lipc" stroke="#9b0000" stroke-width="24"/>
<use href="#lipc" stroke="#a50000" stroke-width="15"/>
<use href="#lipc" stroke="#b00000" stroke-width="7"/>
</g></g></g>
<path id="topsurf" d="M860 579 L297 579 L297 592 L296.2 593.4 C293.8 593.9 286.9 595.0 281.8 596.2 C276.8 597.4 271.2 599.0 265.9 600.6 C260.6 602.2 255.2 604.2 249.9 606.1 C244.6 608.0 239.2 609.9 233.9 611.7 C228.6 613.5 224.1 614.8 218.0 616.9 C211.9 619.0 203.7 621.7 197.6 624.1 C191.5 626.5 186.9 628.8 181.6 631.1 C176.3 633.4 169.2 636.4 165.6 638.0 C162.0 639.6 163.3 638.7 160.0 640.5 C156.7 642.3 150.5 646.0 146.0 649.0 C141.5 652.0 136.6 655.7 133.0 658.5 C129.4 661.3 127.1 663.6 124.5 666.0 C121.9 668.4 119.8 670.5 117.5 673.0 C115.2 675.5 113.2 678.2 111.0 681.0 C108.8 683.8 106.4 686.8 104.4 689.5 C102.4 692.2 100.7 694.8 99.0 697.5 C97.3 700.2 95.9 703.0 94.5 706.0 C93.1 709.0 91.5 712.3 90.4 715.6 C89.3 718.9 88.5 722.7 87.9 725.9 C87.3 729.1 87.1 729.3 86.9 735.0 C86.7 740.7 86.6 752.5 86.5 760.0 C86.4 767.5 86.5 771.9 86.5 780.0 C86.5 788.1 86.5 803.8 86.5 808.5 L91.5 808.5 L91.5 808.5 L93.5 780.0 L95.5 760.1 L98.9 735.5 L100.7 728.2 L103.7 720.0 L107.6 712.2 L111.9 705.2 L117.3 698.9 L124.3 691.6 L130.5 684.7 L136.5 678.8 L143.5 671.8 L154.9 662.3 L167.1 653.1 L171.2 650.8 L187.0 643.5 L202.3 636.2 L222.2 629.2 L238.2 624.5 L254.8 620.3 L270.8 616.4 L286.0 613.7 L299.8 612.1 L340.0 610.0 L400.0 608.0 L500.0 606.5 L600.0 605.0 L700.0 602.5 L860.0 598.5 Z" fill="url(#gtop)"/>
<use href="#topsurf" filter="url(#b2)"/>
<g filter="url(#b1)">
<rect x="284" y="636" width="206" height="170" fill="#870000"/>
<rect x="486" y="632" width="122" height="172" fill="#8c0000"/>
<rect x="600" y="628" width="206" height="172" fill="#880000"/>
<rect x="804" y="630" width="45" height="175" fill="#8d0000"/>
<rect x="522" y="634" width="5" height="168" fill="#7c0000"/>
<rect x="564" y="634" width="5" height="168" fill="#7c0000"/>
<rect x="484" y="634" width="5" height="168" fill="#7c0000"/>
<rect x="291" y="644" width="191" height="138" fill="#7d0000"/>
<rect x="607" y="635" width="186" height="140" fill="#7e0000"/>
<path d="M291 644 V782 H482" stroke="#740000" stroke-width="1.5" fill="none"/>
<path d="M607 635 V775 H793 V635" stroke="#740000" stroke-width="1.5" fill="none"/>
<rect x="494" y="642" width="20" height="3" fill="#900000"/>
<rect x="493" y="650" width="27" height="5" fill="#7c0000"/>
<rect x="492" y="658" width="20" height="4" fill="#900000"/>
<rect x="493" y="666" width="20" height="5" fill="#7c0000"/>
<rect x="491" y="677" width="25" height="4" fill="#900000"/>
<rect x="490" y="687" width="27" height="5" fill="#900000"/>
<rect x="490" y="695" width="24" height="4" fill="#980000"/>
<rect x="493" y="705" width="22" height="5" fill="#7c0000"/>
<rect x="492" y="716" width="27" height="3" fill="#800000"/>
<rect x="491" y="723" width="24" height="4" fill="#980000"/>
<rect x="494" y="732" width="22" height="4" fill="#7c0000"/>
<rect x="494" y="741" width="22" height="5" fill="#7c0000"/>
<rect x="490" y="750" width="24" height="4" fill="#7c0000"/>
<rect x="492" y="758" width="20" height="5" fill="#7c0000"/>
<rect x="491" y="766" width="24" height="5" fill="#940000"/>
<rect x="493" y="774" width="21" height="3" fill="#800000"/>
<rect x="493" y="782" width="26" height="3" fill="#800000"/>
<rect x="493" y="790" width="27" height="4" fill="#800000"/>
<rect x="534" y="642" width="25" height="4" fill="#7c0000"/>
<rect x="531" y="651" width="30" height="5" fill="#940000"/>
<rect x="530" y="659" width="22" height="3" fill="#800000"/>
<rect x="532" y="666" width="26" height="4" fill="#900000"/>
<rect x="532" y="673" width="25" height="4" fill="#900000"/>
<rect x="533" y="683" width="22" height="4" fill="#980000"/>
<rect x="534" y="690" width="26" height="5" fill="#980000"/>
<rect x="533" y="699" width="26" height="4" fill="#7c0000"/>
<rect x="532" y="708" width="30" height="5" fill="#980000"/>
<rect x="533" y="718" width="28" height="3" fill="#800000"/>
<rect x="532" y="726" width="25" height="4" fill="#7c0000"/>
<rect x="533" y="735" width="30" height="5" fill="#7c0000"/>
<rect x="530" y="743" width="25" height="5" fill="#940000"/>
<rect x="534" y="754" width="25" height="4" fill="#900000"/>
<rect x="532" y="763" width="25" height="3" fill="#7c0000"/>
<rect x="533" y="771" width="29" height="4" fill="#800000"/>
<rect x="534" y="779" width="27" height="4" fill="#940000"/>
<rect x="531" y="787" width="24" height="4" fill="#800000"/>
<rect x="532" y="794" width="25" height="5" fill="#900000"/>
<rect x="572" y="642" width="27" height="3" fill="#900000"/>
<rect x="573" y="651" width="31" height="4" fill="#800000"/>
<rect x="576" y="659" width="30" height="4" fill="#940000"/>
<rect x="572" y="668" width="27" height="5" fill="#7c0000"/>
<rect x="574" y="677" width="24" height="4" fill="#940000"/>
<rect x="575" y="687" width="28" height="4" fill="#980000"/>
<rect x="575" y="697" width="30" height="3" fill="#900000"/>
<rect x="576" y="703" width="24" height="4" fill="#980000"/>
<rect x="575" y="711" width="24" height="3" fill="#940000"/>
<rect x="572" y="719" width="28" height="3" fill="#800000"/>
<rect x="572" y="726" width="24" height="3" fill="#900000"/>
<rect x="572" y="735" width="32" height="5" fill="#980000"/>
<rect x="576" y="743" width="28" height="3" fill="#900000"/>
<rect x="576" y="749" width="26" height="5" fill="#800000"/>
<rect x="573" y="757" width="28" height="4" fill="#7c0000"/>
<rect x="574" y="767" width="29" height="3" fill="#900000"/>
<rect x="572" y="773" width="30" height="5" fill="#900000"/>
<rect x="572" y="783" width="25" height="3" fill="#7c0000"/>
<rect x="574" y="792" width="29" height="3" fill="#940000"/>
<rect x="814" y="642" width="29" height="3" fill="#800000"/>
<rect x="811" y="648" width="33" height="3" fill="#800000"/>
<rect x="811" y="654" width="33" height="4" fill="#7c0000"/>
<rect x="812" y="664" width="29" height="4" fill="#800000"/>
<rect x="814" y="673" width="30" height="4" fill="#940000"/>
<rect x="813" y="682" width="28" height="3" fill="#800000"/>
<rect x="811" y="689" width="28" height="5" fill="#800000"/>
<rect x="813" y="698" width="27" height="3" fill="#7c0000"/>
<rect x="811" y="707" width="28" height="5" fill="#800000"/>
<rect x="814" y="717" width="29" height="5" fill="#980000"/>
<rect x="811" y="728" width="31" height="4" fill="#900000"/>
<rect x="815" y="737" width="33" height="5" fill="#980000"/>
<rect x="812" y="746" width="34" height="4" fill="#940000"/>
<rect x="813" y="755" width="33" height="5" fill="#980000"/>
<rect x="815" y="763" width="28" height="5" fill="#800000"/>
<rect x="815" y="773" width="33" height="5" fill="#7c0000"/>
<rect x="812" y="781" width="31" height="4" fill="#980000"/>
<rect x="811" y="788" width="33" height="5" fill="#980000"/>
<rect x="258" y="642" width="29" height="3" fill="#800000"/>
<rect x="259" y="648" width="26" height="5" fill="#7c0000"/>
<rect x="256" y="658" width="22" height="3" fill="#7c0000"/>
<rect x="260" y="665" width="29" height="3" fill="#7c0000"/>
<rect x="258" y="671" width="28" height="5" fill="#800000"/>
<rect x="257" y="680" width="23" height="3" fill="#7c0000"/>
<rect x="258" y="689" width="24" height="4" fill="#940000"/>
<rect x="259" y="699" width="22" height="3" fill="#900000"/>
<rect x="257" y="708" width="24" height="5" fill="#7c0000"/>
<rect x="259" y="719" width="28" height="3" fill="#900000"/>
<rect x="259" y="725" width="22" height="4" fill="#980000"/>
<rect x="258" y="733" width="27" height="3" fill="#900000"/>
<rect x="260" y="741" width="26" height="3" fill="#980000"/>
<rect x="258" y="749" width="30" height="3" fill="#940000"/>
<rect x="257" y="758" width="28" height="4" fill="#7c0000"/>
<rect x="258" y="767" width="23" height="3" fill="#900000"/>
<rect x="259" y="776" width="27" height="5" fill="#980000"/>
<rect x="256" y="784" width="24" height="4" fill="#800000"/>
<rect x="257" y="794" width="29" height="3" fill="#900000"/>
<rect x="294" y="787" width="7" height="8" fill="#8e0000"/>
<rect x="305" y="787" width="7" height="8" fill="#8e0000"/>
<rect x="316" y="787" width="7" height="8" fill="#940000"/>
<rect x="327" y="787" width="7" height="8" fill="#8e0000"/>
<rect x="338" y="787" width="7" height="8" fill="#8e0000"/>
<rect x="349" y="787" width="7" height="8" fill="#9a0000"/>
<rect x="360" y="787" width="7" height="8" fill="#9a0000"/>
<rect x="371" y="787" width="7" height="8" fill="#9a0000"/>
<rect x="382" y="787" width="7" height="8" fill="#8e0000"/>
<rect x="393" y="787" width="7" height="8" fill="#940000"/>
<rect x="404" y="787" width="7" height="8" fill="#8e0000"/>
<rect x="415" y="787" width="7" height="8" fill="#8e0000"/>
<rect x="426" y="787" width="7" height="8" fill="#940000"/>
<rect x="437" y="787" width="7" height="8" fill="#8e0000"/>
<rect x="448" y="787" width="7" height="8" fill="#940000"/>
<rect x="459" y="787" width="7" height="8" fill="#8e0000"/>
<rect x="470" y="787" width="7" height="8" fill="#9a0000"/>
<rect x="609" y="781" width="7" height="8" fill="#8e0000"/>
<rect x="620" y="781" width="7" height="8" fill="#8e0000"/>
<rect x="631" y="781" width="7" height="8" fill="#8e0000"/>
<rect x="642" y="781" width="7" height="8" fill="#940000"/>
<rect x="653" y="781" width="7" height="8" fill="#940000"/>
<rect x="664" y="781" width="7" height="8" fill="#8e0000"/>
<rect x="675" y="781" width="7" height="8" fill="#940000"/>
<rect x="686" y="781" width="7" height="8" fill="#940000"/>
<rect x="697" y="781" width="7" height="8" fill="#9a0000"/>
<rect x="708" y="781" width="7" height="8" fill="#9a0000"/>
<rect x="719" y="781" width="7" height="8" fill="#9a0000"/>
<rect x="730" y="781" width="7" height="8" fill="#940000"/>
<rect x="741" y="781" width="7" height="8" fill="#8e0000"/>
<rect x="752" y="781" width="7" height="8" fill="#8e0000"/>
<rect x="763" y="781" width="7" height="8" fill="#940000"/>
<rect x="774" y="781" width="7" height="8" fill="#940000"/>
</g>
<g filter="url(#b1)">
<rect x="253" y="640" width="35" height="170" fill="#8c0000" opacity=".6"/>
<path d="M176 812 L176 750 L196 720 L250 718 L252 812 Z" fill="#890000" stroke="#760000" stroke-width="1.5"/>
<rect x="190" y="785" width="14" height="24" fill="#960000"/><rect x="218" y="785" width="14" height="24" fill="#960000"/>
<rect x="168" y="808" width="681" height="158" fill="#860000"/>
<rect x="172" y="818" width="160" height="148" fill="#890000" stroke="#7a0000" stroke-width="1.5"/>
<circle cx="638" cy="955" r="4" fill="#980000"/>
<circle cx="695" cy="860" r="3" fill="#980000"/>
<circle cx="819" cy="859" r="3" fill="#980000"/>
<circle cx="485" cy="848" r="3" fill="#760000"/>
<circle cx="784" cy="913" r="4" fill="#7a0000"/>
<circle cx="813" cy="815" r="5" fill="#760000"/>
<circle cx="235" cy="821" r="3" fill="#7a0000"/>
<circle cx="789" cy="819" r="4" fill="#940000"/>
<circle cx="626" cy="862" r="5" fill="#7a0000"/>
<circle cx="830" cy="887" r="4" fill="#760000"/>
<circle cx="262" cy="929" r="5" fill="#940000"/>
<circle cx="591" cy="953" r="3" fill="#940000"/>
<circle cx="497" cy="870" r="5" fill="#940000"/>
<circle cx="205" cy="829" r="5" fill="#760000"/>
<circle cx="585" cy="839" r="4" fill="#980000"/>
<circle cx="243" cy="816" r="5" fill="#760000"/>
<circle cx="393" cy="865" r="3" fill="#980000"/>
<circle cx="559" cy="913" r="4" fill="#760000"/>
<circle cx="754" cy="862" r="5" fill="#940000"/>
<circle cx="519" cy="834" r="4" fill="#940000"/>
<circle cx="190" cy="916" r="3" fill="#7a0000"/>
<circle cx="427" cy="837" r="3" fill="#760000"/>
<circle cx="651" cy="936" r="3" fill="#7a0000"/>
<circle cx="633" cy="942" r="3" fill="#7a0000"/>
<circle cx="604" cy="910" r="3" fill="#980000"/>
<circle cx="605" cy="866" r="3" fill="#940000"/>
<circle cx="781" cy="889" r="3" fill="#7a0000"/>
<circle cx="366" cy="912" r="5" fill="#760000"/>
<circle cx="218" cy="849" r="3" fill="#980000"/>
<circle cx="439" cy="814" r="5" fill="#940000"/>
<circle cx="478" cy="910" r="3" fill="#760000"/>
<circle cx="267" cy="865" r="5" fill="#7a0000"/>
<circle cx="190" cy="906" r="4" fill="#980000"/>
<circle cx="305" cy="935" r="5" fill="#7a0000"/>
<circle cx="570" cy="858" r="5" fill="#7a0000"/>
<circle cx="493" cy="870" r="5" fill="#7a0000"/>
<circle cx="369" cy="852" r="5" fill="#7a0000"/>
<circle cx="572" cy="935" r="5" fill="#760000"/>
<circle cx="606" cy="824" r="3" fill="#760000"/>
<circle cx="214" cy="943" r="4" fill="#7a0000"/>
<circle cx="576" cy="877" r="4" fill="#980000"/>
<circle cx="475" cy="945" r="3" fill="#760000"/>
<circle cx="304" cy="870" r="4" fill="#760000"/>
<circle cx="461" cy="866" r="3" fill="#760000"/>
<circle cx="245" cy="880" r="4" fill="#980000"/>
<circle cx="430" cy="827" r="3" fill="#7a0000"/>
<circle cx="463" cy="906" r="5" fill="#7a0000"/>
<circle cx="269" cy="904" r="3" fill="#980000"/>
<circle cx="513" cy="945" r="5" fill="#7a0000"/>
<circle cx="779" cy="820" r="3" fill="#980000"/>
<circle cx="541" cy="891" r="3" fill="#760000"/>
<circle cx="787" cy="831" r="4" fill="#760000"/>
<circle cx="493" cy="893" r="3" fill="#760000"/>
<circle cx="252" cy="927" r="5" fill="#940000"/>
<circle cx="220" cy="845" r="4" fill="#940000"/>
<circle cx="261" cy="933" r="3" fill="#980000"/>
<circle cx="205" cy="939" r="5" fill="#760000"/>
<circle cx="814" cy="909" r="4" fill="#760000"/>
<circle cx="798" cy="830" r="3" fill="#760000"/>
<circle cx="829" cy="841" r="4" fill="#980000"/>
<circle cx="513" cy="911" r="5" fill="#980000"/>
<circle cx="626" cy="930" r="5" fill="#760000"/>
<circle cx="706" cy="943" r="3" fill="#940000"/>
<circle cx="790" cy="834" r="4" fill="#760000"/>
<circle cx="410" cy="840" r="4" fill="#980000"/>
<circle cx="436" cy="814" r="4" fill="#940000"/>
<circle cx="321" cy="863" r="5" fill="#7a0000"/>
<circle cx="525" cy="925" r="4" fill="#7a0000"/>
<circle cx="509" cy="915" r="5" fill="#940000"/>
<circle cx="378" cy="922" r="3" fill="#7a0000"/>
<circle cx="568" cy="868" r="5" fill="#940000"/>
<circle cx="389" cy="846" r="3" fill="#980000"/>
<circle cx="534" cy="822" r="5" fill="#760000"/>
<circle cx="458" cy="855" r="3" fill="#980000"/>
<circle cx="657" cy="882" r="3" fill="#980000"/>
<circle cx="566" cy="945" r="4" fill="#940000"/>
<circle cx="814" cy="927" r="4" fill="#760000"/>
<circle cx="207" cy="883" r="5" fill="#760000"/>
<circle cx="462" cy="958" r="4" fill="#940000"/>
<circle cx="839" cy="956" r="3" fill="#7a0000"/>
<circle cx="589" cy="928" r="3" fill="#760000"/>
<circle cx="447" cy="872" r="3" fill="#760000"/>
<circle cx="819" cy="841" r="4" fill="#760000"/>
<circle cx="820" cy="949" r="5" fill="#940000"/>
<circle cx="254" cy="862" r="3" fill="#980000"/>
<circle cx="437" cy="857" r="5" fill="#760000"/>
<circle cx="658" cy="948" r="5" fill="#760000"/>
<circle cx="358" cy="869" r="4" fill="#940000"/>
<circle cx="727" cy="945" r="5" fill="#7a0000"/>
<circle cx="577" cy="869" r="3" fill="#980000"/>
<path d="M234 858 L262 874 Q270 890 268 904 L252 966 L167 966 L192 899 L217 872 Z" fill="#ac0000"/>
<path d="M262 874 Q270 890 268 904 L252 966 L226 966 L252 900 Z" fill="#980000"/>
<path d="M234 858 L262 874 L254 896 L222 874 Z" fill="#b60000"/>
<path d="M206 890 l34 22" stroke="#9a0000" stroke-width="2"/>
<path d="M201 901 l34 22" stroke="#9a0000" stroke-width="2"/>
<path d="M196 912 l34 22" stroke="#9a0000" stroke-width="2"/>
<path d="M191 923 l34 22" stroke="#9a0000" stroke-width="2"/>
<path d="M186 934 l34 22" stroke="#9a0000" stroke-width="2"/>
<path d="M181 945 l34 22" stroke="#9a0000" stroke-width="2"/>
<path d="M176 956 l34 22" stroke="#9a0000" stroke-width="2"/>
<path d="M347 815.5 L403 815.5 L404 898 L406 966 L338 966 L345 898 Z" fill="#b40000"/>
<path d="M345 899 L404.5 899 L406 966 L338 966 Z" fill="#aa0000"/>
<rect x="343" y="895" width="62" height="4" fill="#960000"/>
<circle cx="537" cy="844" r="26" fill="#8a0000" stroke="#6e0000" stroke-width="2"/>
<circle cx="698" cy="844" r="30" fill="url(#gknob)"/>
<path d="M646 816 V848 Q646 858 636 858 H609" fill="none" stroke="#680000" stroke-width="2.5"/>
<path d="M485 865 L509 854 L524 870 L541.5 895 L559 925.6 L568.4 948.6 L564.5 966 L493 966 L479 933 L479.3 899 Z" fill="#a60000"/>
<path d="M485 864.5 L509 854 L524.3 870 L499.4 887 Z" fill="#b80000"/>
<path d="M784 857 Q789 848 806 847 L849 862 L849 966 L804.6 966 L804.6 939 L801 911 L793.4 887 L786 868 Z" fill="#aa0000"/>
<path d="M806 847 Q834 880 849 930 L849 862 Z" fill="#b60000"/>
<path d="M838 822 L849 827 L849 842 L836 832 Z" fill="#b20000"/>
<circle cx="790" cy="826" r="18" fill="#780000" filter="url(#b4)"/>
<circle cx="578" cy="935" r="13" fill="#900000" stroke="#700000" stroke-width="1.5"/><circle cx="620" cy="935" r="13" fill="#900000" stroke="#700000" stroke-width="1.5"/>
<rect x="727" y="904" width="17" height="30" fill="#8e0000" stroke="#720000" stroke-width="1.5"/>
<rect x="478" y="962" width="172" height="4" fill="#500000"/><path d="M640 966 L660 953 L676 966 Z" fill="#300000"/>
</g>
<!-- sidewall -->
<polygon points="86,805 163,805 157,966 6,966 6,888" fill="#7f0000" filter="url(#b1)"/>
<g filter="url(#b2)">
<polygon points="86.5,808.5 -10.0,903.2 22.2,936.0 113.1,835.6" fill="#980000" filter="url(#b4)"/>
<polygon points="6,905 6,966 70,966 30,925" fill="#b00000" filter="url(#b8)"/>
<polygon points="96.3,818.5 -0.2,913.2 9.6,923.2 104.0,838.0 104.0,820.0" fill="#b40000"/>
<polygon points="86.5,808.5 -10.0,903.2 -1.2,912.1 95.0,826.0 96.0,809.0" fill="#bc0000"/>
</g>
<path d="M144.5 790 L155 966" stroke="#3c0000" stroke-width="2" fill="none" filter="url(#b1)"/>
<!-- black -->
<path d="M6 621.5 L266 588.8 L297 592.5 L296.2 593.4 C293.8 593.9 286.9 595.0 281.8 596.2 C276.8 597.4 271.2 599.0 265.9 600.6 C260.6 602.2 255.2 604.2 249.9 606.1 C244.6 608.0 239.2 609.9 233.9 611.7 C228.6 613.5 224.1 614.8 218.0 616.9 C211.9 619.0 203.7 621.7 197.6 624.1 C191.5 626.5 186.9 628.8 181.6 631.1 C176.3 633.4 169.2 636.4 165.6 638.0 C162.0 639.6 163.3 638.7 160.0 640.5 C156.7 642.3 150.5 646.0 146.0 649.0 C141.5 652.0 136.6 655.7 133.0 658.5 C129.4 661.3 127.1 663.6 124.5 666.0 C121.9 668.4 119.8 670.5 117.5 673.0 C115.2 675.5 113.2 678.2 111.0 681.0 C108.8 683.8 106.4 686.8 104.4 689.5 C102.4 692.2 100.7 694.8 99.0 697.5 C97.3 700.2 95.9 703.0 94.5 706.0 C93.1 709.0 91.5 712.3 90.4 715.6 C89.3 718.9 88.5 722.7 87.9 725.9 C87.3 729.1 87.1 729.3 86.9 735.0 C86.7 740.7 86.6 752.5 86.5 760.0 C86.4 767.5 86.5 771.9 86.5 780.0 C86.5 788.1 86.5 803.8 86.5 808.5 L86.5 808.5 L6 887.5 Z" fill="#000"/>
<!-- marker -->
<rect x="10" y="92" width="4" height="5" fill="#3045dc"/><rect x="7" y="96" width="7" height="3" fill="#dcdcf4"/>
</svg>
</div>

<div id="panel" class="abs"></div>
<div id="phead" class="abs"></div>
<div id="ptitle" class="abs">Visualization</div>
<!-- Properties -->
<div class="abs tri" style="top:144px"></div>
<div class="abs sect" style="top:140px">Properties</div>
<div class="abs row" style="top:161px;height:31px"></div>
<div class="abs row" style="top:192px;height:38px"></div>
<div class="abs row" style="top:230px;height:39px"></div>
<div class="abs row" style="top:269px;height:30px"></div>
<div class="abs row" style="top:299px;height:27px;border-bottom:0"></div>
<div class="abs vdiv" style="left:998px;top:161px;height:165px"></div>
<div class="abs lbl" style="top:168px">Visualization</div>
<div class="abs lbl" style="top:203px">Format</div>
<div class="abs lbl" style="top:241px">Aspect Ratio</div>
<div class="abs lbl" style="top:276px">Flip Horizontally</div>
<div class="abs lbl" style="top:305px">Flip Vertically</div>
<div class="abs dd" style="left:999px;top:161px;width:111px;height:28px;line-height:28px"><span style="left:6px">Image</span><i class="caret" style="top:10px"></i></div>
<div class="abs dd" style="left:999px;top:196px;width:111px;height:30px;line-height:28px"><span style="left:10px;letter-spacing:-0.8px">R32_UINT</span><i class="caret" style="top:11px"></i></div>
<div class="abs dd" style="left:999px;top:233px;width:111px;height:33px;line-height:31px"><span style="left:9px;letter-spacing:-0.48px">100% (1:1)</span><i class="caret" style="top:13px"></i></div>
<div class="abs cb" style="top:275px"></div>
<div class="abs cb" style="top:305px"></div>
<!-- Background -->
<div class="abs tri" style="top:339px"></div>
<div class="abs sect" style="top:334px">Background</div>
<div class="abs row" style="top:357px;height:35px;border-bottom:0"></div>
<div class="abs lbl" style="top:366px">Color</div>
<div class="abs dd" style="left:926px;top:357px;width:184px;height:34px;line-height:32px"><span style="left:9px;letter-spacing:-0.4px">Grey</span><i class="caret" style="top:14px"></i></div>
<!-- Histogram -->
<div class="abs tri" style="top:406px"></div>
<div class="abs sect" style="top:401px">Histogram</div>
<div class="abs" style="left:1036px;top:394px;width:28px;height:28px;background:#868686"></div>
<div class="abs" style="left:1071px;top:402px;font-family:'Liberation Mono',monospace;font-size:12.5px;letter-spacing:-0.9px;line-height:16px;white-space:nowrap">[0,1]</div>
<div class="abs" style="left:880px;top:423px;width:232px;height:76px;background:#fff"></div>
<div class="abs row" style="top:500px;height:23px;border-bottom:0"></div>
<div class="abs vdiv" style="left:897px;top:500px;height:23px"></div>
<div class="abs vdiv" style="left:977px;top:500px;height:23px"></div>
<div class="abs vdiv" style="left:1057px;top:500px;height:23px"></div>
<div class="abs vdiv" style="left:1081px;top:500px;height:23px"></div>
<div class="abs lbl" style="top:504px;left:884px">R</div>
<div class="abs lbl" style="top:504px;left:904px;letter-spacing:-0.6px">1,123,357</div>
<div class="abs lbl" style="top:504px;left:983px;width:71px;overflow:hidden;letter-spacing:-0.6px">4,294,918,912</div>
<svg class="abs" style="left:860px;top:92px" width="268" height="440" viewBox="860 92 268 440" fill="none" stroke="#111" stroke-width="1.3">
<!-- header icon -->
<g stroke="#333" stroke-width="1.4"><path d="M869.6 121.8V118.4M873.1 121.8V114.2M876.6 121.8V107.8M880.1 121.8V111.4M883.6 121.8V115.4"/></g>
<path d="M1058.4 110.4 H1072 L1065.2 120.2 Z" stroke-linejoin="miter"/>
<path d="M1090.4 109 L1103 121.6 M1103 109 L1090.4 121.6"/>
<!-- grid icon -->
<rect x="1090.6" y="335.8" width="14.2" height="14.2" stroke-width="1.2"/>
<g fill="#111" stroke="none"><rect x="1093" y="338.2" width="2" height="2"/><rect x="1096.7" y="338.2" width="2" height="2"/><rect x="1100.4" y="338.2" width="2" height="2"/><rect x="1093" y="341.9" width="2" height="2"/><rect x="1096.7" y="341.9" width="2" height="2"/><rect x="1100.4" y="341.9" width="2" height="2"/><rect x="1093" y="345.6" width="2" height="2"/><rect x="1096.7" y="345.6" width="2" height="2"/><rect x="1100.4" y="345.6" width="2" height="2"/></g>
<!-- range icon -->
<g stroke="#fff" stroke-width="1.5"><rect x="1042.2" y="403" width="15.6" height="9.8"/><path d="M1044.6 408 H1048.4 M1051.6 408 H1055.4" stroke-width="1.6"/></g>
<g fill="#fff" stroke="none"><path d="M1046.4 405.8 L1049 408 L1046.4 410.2Z M1053.6 405.8 L1051 408 L1053.6 410.2Z"/></g>
<!-- histogram -->
<path d="M986 492 L987 486 L990 483 L993 479 L995.5 471 L997 470 L998.6 470 L1000.6 490 L1001 492 Z" fill="#f5b0b0" stroke="none"/>
<path d="M888 492.2 H960 L975 491.4 L983 490.2 L985.6 488 L987 487 L989 485 L991 481.5 L993.5 479 L995.5 471 L996.8 470 L998.6 470.5 L999.8 478.5 L1001.2 490.4 L1003.4 490 L1004 487 L1005.4 487 L1005.8 490.4 L1012 490.6 L1016.4 488 L1018 488.6 L1020 489.8 L1030 491 L1040 491.8 L1070 492 L1074 490.2 L1077 490.8 L1079 490 L1082 490.4 L1084 491.8 L1092 491.8 L1094 490.8 L1098 491.4 L1101 492" stroke="#e00000" stroke-width="1.5" stroke-linejoin="round"/>
<g fill="#e00000" stroke="none"><rect x="886.8" y="463.5" width="2" height="29.4"/><rect x="985.2" y="428.6" width="2" height="60"/><rect x="996.8" y="451.6" width="2" height="20"/><rect x="1100.4" y="452.4" width="2" height="40.5"/></g>
<!-- lock -->
<rect x="1063.8" y="510.6" width="10.6" height="8" stroke-width="1.2"/><path d="M1066 510.6 V507.6 A3.1 3.1 0 0 1 1072.2 507.6 V510.6" stroke-width="1.2"/>
<!-- x box -->
<rect x="1086" y="504.2" width="15.2" height="15.2" stroke-width="1.2" fill="#fff"/><path d="M1089.6 507.8 L1097.6 515.8 M1097.6 507.8 L1089.6 515.8" stroke="#000" stroke-width="2.4"/>
</svg>

</body>
</html>
